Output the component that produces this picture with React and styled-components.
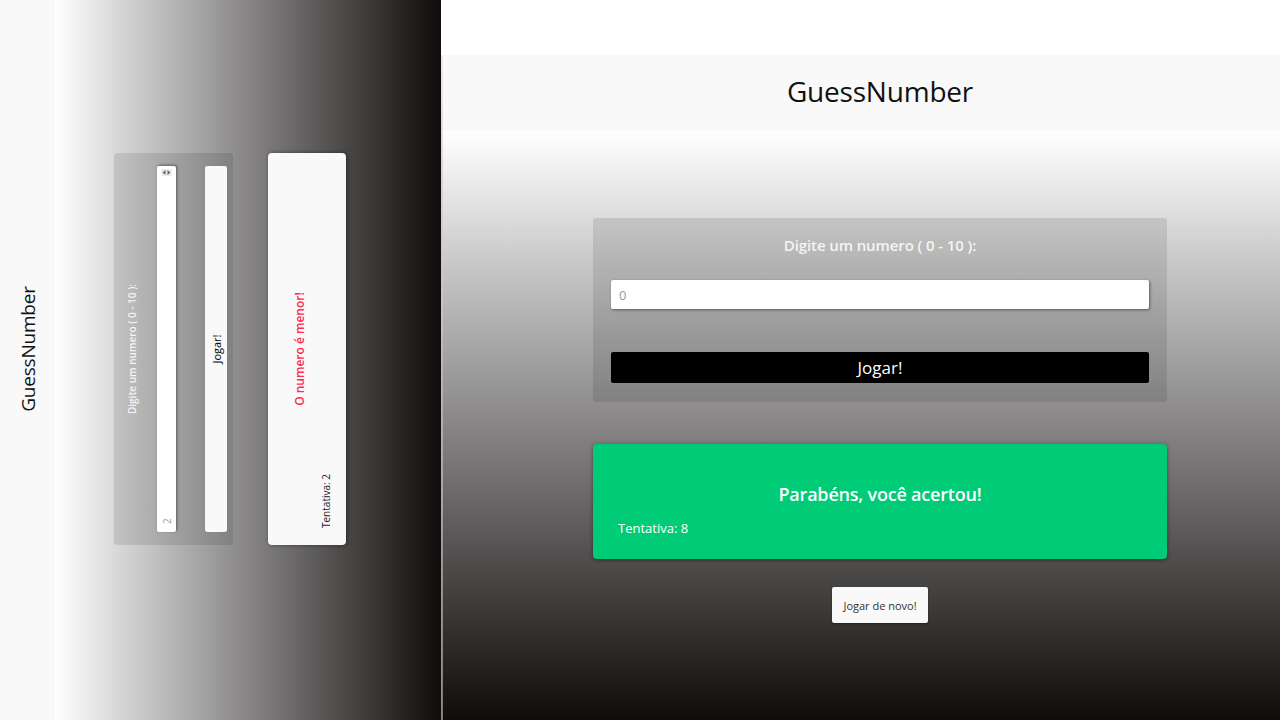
import React from "react";
import styled, { createGlobalStyle, css } from "styled-components";

const GlobalStyle = createGlobalStyle`
  html, body {
    margin: 0;
    padding: 0;
    width: 1280px;
    height: 720px;
    overflow: hidden;
  }
  body {
    font-family: "Open Sans", "Noto Sans", sans-serif;
    background: #ffffff;
  }
  * { box-sizing: border-box; }
`;

const sizes = {
  lg: {
    headerH: 76,
    headerFont: 28,
    headerNudge: 4,
    shift: 37,
    bodyTop: 87,
    boxW: 574,
    boxPad: "16px 18px 19px",
    labelFont: 15,
    labelSpacing: -0.1,
    labelLine: 22,
    inputGap: 24,
    inputH: 29,
    inputFont: 13,
    buttonGap: 43,
    buttonH: 31,
    buttonFont: 17,
    cardGap: 42,
    cardPad: "38px 25px 22px",
    titleFont: 18,
    titleLine: 24,
    infoGap: 13,
    infoFont: 13,
    infoLine: 18,
  },
  sm: {
    headerH: 55,
    headerFont: 19,
    headerNudge: 0,
    shift: 22,
    bodyTop: 59,
    boxW: 392,
    boxPad: "11px 13px 6px",
    labelFont: 10,
    labelSpacing: 0,
    labelLine: 14,
    inputGap: 18,
    inputH: 19,
    inputFont: 10,
    buttonGap: 29,
    buttonH: 22,
    buttonFont: 11,
    cardGap: 35,
    cardPad: "24px 17px 14px",
    titleFont: 12,
    titleLine: 16,
    infoGap: 12,
    infoFont: 10,
    infoLine: 12,
  },
};

const s = (key) => (p) => sizes[p.$size][key];

const Page = styled.div`
  display: flex;
  width: 1280px;
  height: 720px;
`;

const RotatedViewport = styled.div`
  flex: none;
  width: 441px;
  height: 720px;
  overflow: hidden;
  background: #1a1614;
`;

const RotatedApp = styled.div`
  width: 720px;
  height: 441px;
  display: flex;
  flex-direction: column;
  transform-origin: 0 0;
  transform: translateY(720px) rotate(-90deg);
`;

const Viewport = styled.div`
  flex: 1;
  display: flex;
  flex-direction: column;
  padding-top: 55px;
  padding-left: 1px;
  background: linear-gradient(
    to bottom,
    #ffffff 0,
    #ffffff 55px,
    #e6e6e6 55px,
    #8a8a8a 100%
  );
`;

const Frame = styled.div`
  flex: 1;
  display: flex;
  flex-direction: column;
  border-left: 1px solid;
  border-image: linear-gradient(to bottom, #ececec, #7a7a7a) 1;
`;

const Header = styled.header`
  flex: none;
  height: ${s("headerH")}px;
  padding-left: ${s("shift")}px;
  padding-bottom: ${s("headerNudge")}px;
  background: #f9f9f9;
  display: flex;
  align-items: center;
  justify-content: center;
  font-size: ${s("headerFont")}px;
  color: #111111;
  letter-spacing: -0.2px;
`;

const Body = styled.main`
  flex: 1;
  display: flex;
  flex-direction: column;
  align-items: center;
  padding-top: ${s("bodyTop")}px;
  padding-left: ${s("shift")}px;
  background: linear-gradient(to bottom, #ffffff 0%, #0f0c0b 100%);
`;

const FormBox = styled.form`
  width: ${s("boxW")}px;
  padding: ${s("boxPad")};
  background: rgba(0, 0, 0, 0.1);
  border-radius: 3px;
  display: flex;
  flex-direction: column;
`;

const Label = styled.label`
  text-align: center;
  font-size: ${s("labelFont")}px;
  line-height: ${s("labelLine")}px;
  letter-spacing: ${s("labelSpacing")}px;
  font-weight: 600;
  color: #f4f4f4;
`;

const InputShell = styled.div`
  margin-top: ${s("inputGap")}px;
  height: ${s("inputH")}px;
  display: flex;
  align-items: center;
  background: #ffffff;
  border-radius: 2px;
  box-shadow: 1px 1px 3px rgba(0, 0, 0, 0.45);
`;

const Field = styled.input`
  flex: 1;
  min-width: 0;
  height: 100%;
  border: none;
  outline: none;
  background: transparent;
  padding: 0 8px;
  font-family: inherit;
  font-size: ${s("inputFont")}px;
  color: #333;
  &::placeholder {
    color: #9a9a9a;
  }
`;

const Spinner = styled.svg`
  flex: none;
  margin-right: 3px;
  background: #ececec;
  border-radius: 1px;
`;

const PlayButton = styled.button`
  margin-top: ${s("buttonGap")}px;
  height: ${s("buttonH")}px;
  border: none;
  border-radius: 2px;
  font-family: inherit;
  font-size: ${s("buttonFont")}px;
  ${(p) =>
    p.$size === "lg"
      ? css`
          background: #000000;
          color: #ffffff;
        `
      : css`
          background: #f9f9f9;
          color: #000000;
          box-shadow: 0 0 1px rgba(0, 0, 0, 0.3);
        `}
`;

const ResultCard = styled.section`
  margin-top: ${s("cardGap")}px;
  width: ${s("boxW")}px;
  padding: ${s("cardPad")};
  border-radius: 4px;
  box-shadow: 0 1px 4px rgba(0, 0, 0, 0.45);
  background: ${(p) => (p.$win ? "#00cb77" : "#f9f9f9")};
  display: flex;
  flex-direction: column;
`;

const ResultTitle = styled.h2`
  margin: 0;
  text-align: center;
  font-size: ${s("titleFont")}px;
  line-height: ${s("titleLine")}px;
  font-weight: 600;
  letter-spacing: ${(p) => (p.$win ? "-0.2px" : "0")};
  color: ${(p) => (p.$win ? "#ffffff" : "#ff2a4f")};
`;

const Attempts = styled.p`
  margin: ${s("infoGap")}px 0 0;
  font-size: ${s("infoFont")}px;
  line-height: ${s("infoLine")}px;
  color: ${(p) => (p.$win ? "#ffffff" : "#222222")};
`;

const AgainButton = styled.button`
  margin-top: 28px;
  width: 96px;
  height: 36px;
  border: none;
  border-radius: 2px;
  background: #f9f9f9;
  box-shadow: 0 1px 2px rgba(0, 0, 0, 0.4);
  font-family: inherit;
  font-size: 11px;
  color: #333333;
`;

function GameScreen({ size, win, value, attempts }) {
  return (
    <>
      <Header $size={size}>GuessNumber</Header>
      <Body $size={size}>
        <FormBox $size={size} onSubmit={(e) => e.preventDefault()}>
          <Label $size={size}>Digite um numero ( 0 - 10 ):</Label>
          <InputShell $size={size}>
            <Field $size={size} type="text" placeholder={value} readOnly />
            {size === "sm" && (
              <Spinner width="7" height="11" viewBox="0 0 7 11">
                <path d="M3.5 1.5 L6 4.5 L1 4.5 Z" fill="#666" />
                <path d="M3.5 9.5 L6 6.5 L1 6.5 Z" fill="#666" />
              </Spinner>
            )}
          </InputShell>
          <PlayButton $size={size} type="button">
            Jogar!
          </PlayButton>
        </FormBox>
        <ResultCard $size={size} $win={win}>
          <ResultTitle $size={size} $win={win}>
            {win ? "Parabéns, você acertou!" : "O numero é menor!"}
          </ResultTitle>
          <Attempts $size={size} $win={win}>
            Tentativa: {attempts}
          </Attempts>
        </ResultCard>
        {win && <AgainButton type="button">Jogar de novo!</AgainButton>}
      </Body>
    </>
  );
}

export default function App() {
  return (
    <>
      <GlobalStyle />
      <Page>
        <RotatedViewport>
          <RotatedApp>
            <GameScreen size="sm" win={false} value="2" attempts={2} />
          </RotatedApp>
        </RotatedViewport>
        <Viewport>
          <Frame>
            <GameScreen size="lg" win value="0" attempts={8} />
          </Frame>
        </Viewport>
      </Page>
    </>
  );
}
